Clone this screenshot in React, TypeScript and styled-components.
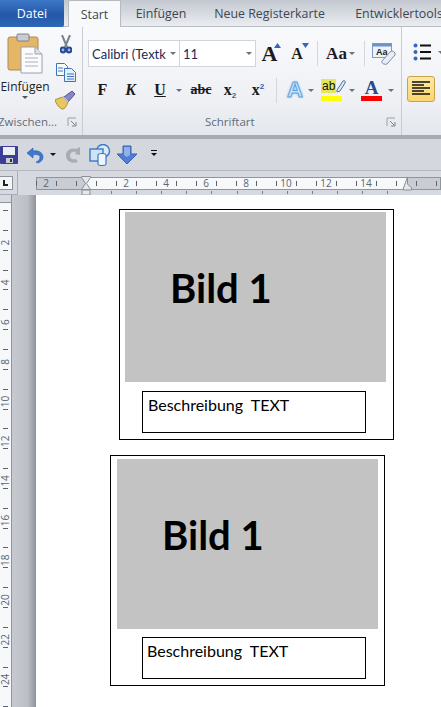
import styled, { createGlobalStyle } from 'styled-components'

const GlobalStyle = createGlobalStyle`
  html, body { margin: 0; padding: 0; background: #fff; overflow: hidden; }
  #root { width: 441px; height: 707px; overflow: hidden; }
`

const Window = styled.div`
  width: 441px;
  height: 707px;
  display: flex;
  flex-direction: column;
  font-family: "Open Sans", "Noto Sans", sans-serif;
  overflow: hidden;
`

const TabStrip = styled.div`
  height: 27px;
  flex-shrink: 0;
  display: flex;
  align-items: stretch;
  background: linear-gradient(#c3c8d0, #dfe2e7 70%, #eceef1);
  box-shadow: inset 0 -1px 0 #b9bdc4;
  white-space: nowrap;
`

const FileTab = styled.div`
  width: 64px;
  flex-shrink: 0;
  margin-right: 4px;
  display: flex;
  align-items: center;
  justify-content: center;
  color: #fff;
  font-size: 12.4px;
  background: linear-gradient(#3d77c7, #2458a8 55%, #2e68b8);
  border-radius: 0 0 2px 0;
`

const Tab = styled.div<{ $active?: boolean; $width: number }>`
  width: ${(p) => p.$width}px;
  flex-shrink: 0;
  box-sizing: border-box;
  display: flex;
  align-items: center;
  justify-content: center;
  font-size: 12.4px;
  color: #3f4650;
  background: ${(p) => (p.$active ? '#f8f9fb' : 'transparent')};
  border: ${(p) => (p.$active ? '1px solid #b6bac1' : 'none')};
  border-bottom: none;
  border-radius: 2px 2px 0 0;
`

const Ribbon = styled.div`
  height: 108px;
  flex-shrink: 0;
  display: flex;
  background: linear-gradient(#f9fafc, #eef0f4 70%, #e4e7ec);
  border-bottom: 4px solid #a6abb2;
  box-sizing: content-box;
`

const Group = styled.div<{ $width: number }>`
  width: ${(p) => p.$width}px;
  flex-shrink: 0;
  display: flex;
  flex-direction: column;
  border-right: 1px solid #c9cdd3;
  box-sizing: border-box;
`

const GroupBody = styled.div`
  flex: 1;
  min-height: 0;
  display: flex;
`

const GroupFooter = styled.div`
  height: 24px;
  flex-shrink: 0;
  display: flex;
  align-items: center;
  padding-bottom: 3px;
  box-sizing: border-box;
`

const GroupLabel = styled.div<{ $left: number }>`
  flex: 1;
  min-width: 0;
  margin-left: ${(p) => p.$left}px;
  font-size: 11.5px;
  color: #5f6b7d;
  white-space: nowrap;
`

const Launcher = styled.svg`
  width: 10px;
  height: 10px;
  flex-shrink: 0;
  margin-right: 5px;
`

const PasteColumn = styled.div`
  width: 50px;
  display: flex;
  flex-direction: column;
  align-items: center;
  padding-top: 6px;
`

const PasteLabel = styled.div`
  font-size: 12px;
  color: #222;
  margin: 5px 0 1px;
  line-height: 16px;
`

const SmallColumn = styled.div`
  margin-left: 5px;
  display: flex;
  flex-direction: column;
  align-items: center;
  gap: 9px;
  padding-top: 8px;
`

const FontBody = styled.div`
  flex: 1;
  display: flex;
  flex-direction: column;
  padding: 13px 0 0 5px;
`

const FontRow = styled.div`
  display: flex;
  align-items: center;
  height: 27px;
`

const Combo = styled.div<{ $width: number }>`
  width: ${(p) => p.$width}px;
  height: 27px;
  flex-shrink: 0;
  box-sizing: border-box;
  display: flex;
  align-items: center;
  padding: 0 3px;
  background: #fff;
  border: 1px solid #d2d6dc;
  font-family: "Lato", sans-serif;
  font-size: 13px;
  color: #1b2a55;
  overflow: hidden;
  white-space: nowrap;
  & + & { border-left: none; }
`

const ComboText = styled.span`
  flex: 1;
  min-width: 0;
  overflow: hidden;
`

const Caret = styled.span<{ $color?: string }>`
  display: inline-block;
  width: 0;
  height: 0;
  flex-shrink: 0;
  border-left: 3px solid transparent;
  border-right: 3px solid transparent;
  border-top: 3px solid ${(p) => p.$color ?? '#6d7178'};
`

const MoreCaret = styled(Caret)`
  position: relative;
  &::before {
    content: '';
    position: absolute;
    left: -3px;
    top: -6px;
    width: 6px;
    height: 1px;
    background: #111;
  }
`

const RowDivider = styled.div<{ $left?: number }>`
  width: 1px;
  height: 25px;
  flex-shrink: 0;
  margin-left: ${(p) => p.$left ?? 0}px;
  background: #d3d6db;
`

const GrowIcon = styled.div<{ $width: number; $size: number; $padLeft?: number }>`
  width: ${(p) => p.$width}px;
  flex-shrink: 0;
  box-sizing: border-box;
  padding-left: ${(p) => p.$padLeft ?? 0}px;
  position: relative;
  text-align: center;
  font-family: "Liberation Serif", serif;
  font-weight: 700;
  font-size: ${(p) => p.$size}px;
  line-height: 27px;
  color: #1c1c1c;
`

const ArrowMark = styled.svg`
  position: absolute;
  top: 3px;
  right: 2px;
  width: 7px;
  height: 5px;
`

const StyleRow = styled.div`
  display: flex;
  align-items: center;
  height: 26px;
  margin-top: 10px;
`

const FormatKey = styled.div<{ $width: number; $italic?: boolean; $underline?: boolean; $strike?: boolean }>`
  width: ${(p) => p.$width}px;
  flex-shrink: 0;
  text-align: center;
  font-family: "Liberation Serif", serif;
  font-weight: 900;
  font-size: ${(p) => (p.$strike ? 14 : 16)}px;
  color: #1a1a1a;
  font-style: ${(p) => (p.$italic ? 'italic' : 'normal')};
  text-decoration: ${(p) => (p.$underline ? 'underline' : p.$strike ? 'line-through' : 'none')};
  white-space: nowrap;
`

const Script = styled.sub<{ $up?: boolean }>`
  font-size: 8px;
  font-family: "Liberation Sans", sans-serif;
  color: #2d5fb0;
  vertical-align: ${(p) => (p.$up ? '6px' : '-3px')};
  line-height: 0;
`

const Slot = styled.div<{ $width: number }>`
  width: ${(p) => p.$width}px;
  flex-shrink: 0;
  display: flex;
  align-items: center;
  justify-content: center;
`

const ColorLetter = styled.div<{ $bar: string }>`
  width: 21px;
  display: flex;
  flex-direction: column;
  align-items: center;
  font-family: "Liberation Serif", serif;
  font-size: 19px;
  line-height: 17px;
  font-weight: 700;
  color: #2b4a8c;
  &::after {
    content: '';
    width: 21px;
    height: 5px;
    background: ${(p) => p.$bar};
  }
`

const HighlightRow = styled.div`
  align-self: flex-start;
  height: 17px;
  display: flex;
  align-items: flex-start;
`

const HighlightLetters = styled.span`
  height: 14px;
  padding: 0 1px;
  font-family: "Liberation Sans", sans-serif;
  font-size: 12px;
  line-height: 14px;
  font-weight: 400;
  color: #111;
  background: #e6e65c;
`

const GlowLetter = styled.div`
  width: 26px;
  margin-left: 5px;
  flex-shrink: 0;
  text-align: center;
  font-family: "Liberation Sans", sans-serif;
  font-size: 22px;
  line-height: 26px;
  font-weight: 700;
  color: #cfe4fa;
  -webkit-text-stroke: 1px #5ba0e0;
  text-shadow: 0 0 3px #7fbdf2;
`

const ParagraphBody = styled.div`
  flex: 1;
  display: flex;
  flex-direction: column;
  padding: 16px 0 0 5px;
`

const ListRow = styled.div`
  display: flex;
  align-items: center;
  gap: 7px;
  margin-left: 6px;
  height: 18px;
`

const AlignButton = styled.div`
  width: 28px;
  height: 26px;
  margin-top: 15px;
  box-sizing: border-box;
  display: flex;
  align-items: center;
  justify-content: center;
  background: linear-gradient(#fde9a4, #fbd56e);
  border: 1px solid #c9a24e;
  border-radius: 3px;
`

const QuickBar = styled.div`
  height: 32px;
  flex-shrink: 0;
  box-sizing: border-box;
  display: flex;
  align-items: center;
  background: #d4d8de;
  border-bottom: 1px solid #b4b8bf;
`

const QuickItem = styled.div<{ $width: number; $left?: number }>`
  width: ${(p) => p.$width}px;
  margin-left: ${(p) => p.$left ?? 0}px;
  height: 24px;
  flex-shrink: 0;
  display: flex;
  align-items: center;
  justify-content: center;
`

const RulerRow = styled.div`
  height: 24px;
  flex-shrink: 0;
  display: flex;
  background: #d6dae0;
`

const TabFrame = styled.div`
  width: 18px;
  height: 24px;
  flex-shrink: 0;
  box-sizing: border-box;
  padding-top: 5px;
  border-right: 1px solid #a9aeb6;
  border-bottom: 1px solid #a9aeb6;
`

const TabSelector = styled.div`
  width: 13px;
  height: 14px;
  box-sizing: border-box;
  background: #f4f5f7;
  border: 1px solid #8d939b;
  border-left: none;
  position: relative;
  &::after {
    content: '';
    position: absolute;
    left: 3px;
    top: 3px;
    width: 3px;
    height: 4px;
    border-left: 2px solid #222;
    border-bottom: 2px solid #222;
  }
`

const RulerSvg = styled.svg`
  display: block;
  flex-shrink: 0;
`

const Workspace = styled.div`
  flex: 1;
  min-height: 0;
  display: flex;
`

const SideRuler = styled.svg`
  width: 12px;
  height: 512px;
  flex-shrink: 0;
  display: block;
`

const PageGutter = styled.div`
  width: 24px;
  flex-shrink: 0;
  background: linear-gradient(90deg, #c6cad0, #bcc0c6 65%, #8f9399);
`

const Page = styled.div`
  flex: 1;
  min-width: 0;
  background: #fff;
  display: flex;
  flex-direction: column;
  padding-top: 14px;
  gap: 15px;
`

const Card = styled.div<{ $indent: number }>`
  width: 275px;
  height: 231px;
  margin-left: ${(p) => p.$indent}px;
  box-sizing: border-box;
  border: 1px solid #000;
  display: flex;
  flex-direction: column;
`

const PictureBox = styled.div<{ $left: number; $top: number }>`
  width: 261px;
  height: 170px;
  margin: ${(p) => p.$top}px 0 0 ${(p) => p.$left}px;
  background: #c3c3c3;
  padding: 53px 0 0 45px;
  box-sizing: border-box;
  font-family: "Lato", "Open Sans", sans-serif;
  font-size: 40px;
  font-weight: 700;
  line-height: 46px;
  color: #000;
`

const Caption = styled.div<{ $left: number; $top: number; $pad: number }>`
  width: 224px;
  height: 42px;
  margin: ${(p) => p.$top}px 0 0 ${(p) => p.$left}px;
  box-sizing: border-box;
  border: 1px solid #000;
  padding: 0 0 0 ${(p) => p.$pad}px;
  font-family: "Lato", "Open Sans", sans-serif;
  font-size: 16px;
  line-height: 26px;
  white-space: pre;
  color: #000;
`

const sideNumbers = [2, 4, 6, 8, 10, 12, 14, 16, 18, 20, 22, 24]
const oddTicks = Array.from({ length: 26 }, (_, i) => i)
const topNumbers = [2, 4, 6, 8, 10, 12, 14]
const tabStops = Array.from({ length: 12 }, (_, i) => 111 + i * 25.1 - 36)

function LauncherIcon() {
  return (
    <Launcher viewBox="0 0 10 10">
      <path d="M1 9V1h8" fill="none" stroke="#9aa0a8" />
      <path d="M4 4l4 4M9 5v4H5" fill="none" stroke="#7d838c" />
    </Launcher>
  )
}

function PasteIcon() {
  return (
    <svg width="36" height="41" viewBox="0 0 36 41">
      <rect x="1" y="4" width="30" height="33" rx="2" fill="#e6b667" stroke="#a98a5a" />
      <rect x="10" y="1" width="12" height="7" rx="1" fill="#c9ccd2" stroke="#7e8288" />
      <path d="M14 14h14l7 7v19H14z" fill="#fbfbfd" stroke="#9aa0a8" />
      <path d="M28 14v7h7" fill="#dde3ea" stroke="#9aa0a8" />
      <path d="M18 21h8M18 25h13M18 29h13M18 33h13" stroke="#a8b0bc" />
    </svg>
  )
}

function ScissorsIcon() {
  return (
    <svg width="12" height="19" viewBox="0 0 12 19">
      <path d="M2 0l5 12M10 0L5 12" stroke="#78838f" strokeWidth="2" />
      <circle cx="3" cy="15" r="2.4" fill="#9db7e0" stroke="#27479a" strokeWidth="2" />
      <circle cx="9" cy="15" r="2.4" fill="#9db7e0" stroke="#27479a" strokeWidth="2" />
    </svg>
  )
}

function CopyIcon() {
  return (
    <svg width="20" height="19" viewBox="0 0 20 19">
      <path d="M0.5 0.5h8l3 3v9h-11z" fill="#f7fafd" stroke="#3f74b8" />
      <path d="M8.5 5.5h7l4 4v9h-11z" fill="#e3eefa" stroke="#3f74b8" />
      <path d="M2 5h5M2 8h5M11 11h7M11 13.5h7M11 16h7" stroke="#3f74b8" />
    </svg>
  )
}

function BrushIcon() {
  return (
    <svg width="21" height="19" viewBox="0 0 21 19">
      <path d="M0 9c4-2 7-3 9-3l4 5c-1 3-3 7-5 7-3 0-7-5-8-9z" fill="#e8c75b" stroke="#a68a3a" />
      <path d="M9 6l4 5 7-8-3-3z" fill="#8b84c9" stroke="#56508f" />
      <path d="M8 6l5 5" stroke="#b8bcc4" strokeWidth="2" />
    </svg>
  )
}

function ClearIcon() {
  return (
    <svg width="24" height="22" viewBox="0 0 24 22">
      <rect x="0.5" y="0.5" width="19" height="14" fill="#eef3fa" stroke="#7d9cc4" />
      <rect x="0.5" y="0.5" width="19" height="3" fill="#6f93c6" />
      <text x="4" y="12" fontSize="9" fontWeight="700" fontFamily="Liberation Sans" fill="#222">Aa</text>
      <path d="M10 18l8-9a3 3 0 0 1 5 3l-8 9c-3 1-6-1-5-3z" fill="#e9edf3" stroke="#7e8ea6" />
    </svg>
  )
}

function PenIcon() {
  return (
    <svg width="10" height="14" viewBox="0 0 10 14">
      <path d="M1 11l6-9c1-1 3 0 2 2L4 12l-3 1z" fill="#dfe8f4" stroke="#4f6fa5" />
    </svg>
  )
}

function BulletsIcon() {
  return (
    <svg width="18" height="18" viewBox="0 0 18 18">
      <circle cx="2.5" cy="2.5" r="2" fill="#3a66b8" />
      <circle cx="2.5" cy="9" r="2" fill="#3a66b8" />
      <circle cx="2.5" cy="15.5" r="2" fill="#3a66b8" />
      <path d="M7 2.5h11M7 9h11M7 15.5h11" stroke="#111" strokeWidth="2" />
    </svg>
  )
}

function AlignLeftIcon() {
  return (
    <svg width="18" height="16" viewBox="0 0 18 16">
      <path d="M0 1h18M0 4h12M0 7h18M0 10h12M0 13h18" stroke="#111" strokeWidth="1.4" />
    </svg>
  )
}

function SaveIcon() {
  return (
    <svg width="18" height="18" viewBox="0 0 18 18">
      <rect x="0" y="0" width="18" height="18" rx="1" fill="#3b3e96" />
      <rect x="3" y="1" width="12" height="8" fill="#e8edf6" />
      <rect x="6" y="12" width="7" height="5" fill="#c9ccd6" />
      <rect x="10" y="13" width="2" height="3" fill="#333" />
    </svg>
  )
}

function UndoIcon() {
  return (
    <svg width="18" height="18" viewBox="0 0 18 18">
      <path d="M1 7l6-5v3c6-1 10 2 10 6 0 3-2 5-5 6l-2-1c3-1 4-3 4-5 0-2-3-3-7-2v3z" fill="#3e78cf" stroke="#2a5aa8" strokeWidth="0.6" />
    </svg>
  )
}

function RedoIcon() {
  return (
    <svg width="18" height="18" viewBox="0 0 18 18">
      <path d="M16 1v8l-5-1 1-2c-3-1-6 0-6 3.500s3 4.500 6 3.500l2 3c-5 2-12 0-12-6.500 0-5 5-8 10-6.500z" fill="#a9adb3" />
    </svg>
  )
}

function ShapesIcon() {
  return (
    <svg width="22" height="22" viewBox="0 0 22 22">
      <circle cx="14" cy="7" r="6.500" fill="#dbe9f8" stroke="#3d78c4" strokeWidth="1.400" />
      <rect x="1" y="5" width="13" height="12" fill="#cfe2f6" stroke="#3d78c4" strokeWidth="1.400" />
      <path d="M9 11c0-2 8-2 8 0v9c0 2-8 2-8 0z" fill="#eef5fc" stroke="#3d78c4" strokeWidth="1.200" />
    </svg>
  )
}

function DownIcon() {
  return (
    <svg width="22" height="20" viewBox="0 0 22 20">
      <path d="M7 1h8v8h6l-10 10L1 9h6z" fill="#4f7fd4" stroke="#3a62ad" />
      <path d="M8 2h6v8l-3 2-3-2z" fill="#8fb0e8" />
    </svg>
  )
}

function TopRuler() {
  return (
    <RulerSvg width="405" height="24" viewBox="0 0 405 24">
      <rect x="0.5" y="6.5" width="404" height="12" fill="#c9cdd3" stroke="#8f959d" />
      <rect x="50" y="7" width="321" height="11" fill="#f7f8f9" />
      <text x="10" y="16" fontSize="10" textAnchor="middle" fontFamily="Open Sans" fill="#5a6473">2</text>
      {oddTicks.map((i) => (
        <path key={i} d={`M${i * 20 + 0.5} 10v5`} stroke="#5d636c" />
      ))}
      {topNumbers.map((n) => (
        <text key={n} x={50 + n * 20} y="16" fontSize="10" textAnchor="middle" fontFamily="Open Sans" fill="#5a6473">
          {n}
        </text>
      ))}
      {tabStops.map((x) => (
        <path key={x} d={`M${Math.round(x) + 0.5} 20v3`} stroke="#7b8088" />
      ))}
      <path d="M45.5 5.5h9v1l-4 6 4 6v0h-9l4-6-4-6z" fill="#e6e7e9" stroke="#8a8f96" />
      <rect x="46" y="19" width="8" height="5" fill="#e6e7e9" stroke="#8a8f96" />
      <path d="M371.5 6v7l4 4v2h-8v-2z" fill="#e6e7e9" stroke="#8a8f96" />
    </RulerSvg>
  )
}

function LeftRuler() {
  return (
    <SideRuler viewBox="0 0 12 512">
      <rect width="12" height="512" fill="#f7f8f9" />
      <rect width="12" height="8" fill="#d6dae0" />
      <path d="M0 7.500h12M11.500 0v512" stroke="#8f959d" />
      {oddTicks.map((i) => (
        <path key={i} d={`M3 ${Math.round(i * 19.85 + 15) + 0.5}h5`} stroke="#5d636c" />
      ))}
      {sideNumbers.map((n) => (
        <text
          key={n}
          x="0"
          y="0"
          fontSize="10"
          textAnchor="middle"
          fontFamily="Open Sans"
          fill="#5a6473"
          transform={`translate(9 ${8 + n * 19.85}) rotate(-90)`}
        >
          {n}
        </text>
      ))}
    </SideRuler>
  )
}

export default function App() {
  return (
    <Window>
      <GlobalStyle />
      <TabStrip>
        <FileTab>Datei</FileTab>
        <Tab $active $width={53}>Start</Tab>
        <Tab $width={80}>Einfügen</Tab>
        <Tab $width={137}>Neue Registerkarte</Tab>
        <Tab $width={122}>Entwicklertools</Tab>
      </TabStrip>

      <Ribbon>
        <Group $width={83}>
          <GroupBody>
            <PasteColumn>
              <PasteIcon />
              <PasteLabel>Einfügen</PasteLabel>
              <Caret $color="#555" />
            </PasteColumn>
            <SmallColumn>
              <ScissorsIcon />
              <CopyIcon />
              <BrushIcon />
            </SmallColumn>
          </GroupBody>
          <GroupFooter>
            <GroupLabel $left={-2}>Zwischen...</GroupLabel>
            <LauncherIcon />
          </GroupFooter>
        </Group>

        <Group $width={319}>
          <GroupBody>
            <FontBody>
              <FontRow>
                <Combo $width={92}>
                  <ComboText>Calibri (Textk</ComboText>
                  <Caret />
                </Combo>
                <Combo $width={76}>
                  <ComboText>11</ComboText>
                  <Caret />
                </Combo>
                <GrowIcon $width={27} $size={22}>
                  A
                  <ArrowMark viewBox="0 0 7 5"><path d="M3.5 0L7 5H0z" fill="#3a66b8" /></ArrowMark>
                </GrowIcon>
                <GrowIcon $width={28} $size={16}>
                  A
                  <ArrowMark viewBox="0 0 7 5"><path d="M3.5 5L7 0H0z" fill="#3a66b8" /></ArrowMark>
                </GrowIcon>
                <RowDivider $left={6} />
                <GrowIcon $width={31} $size={17} $padLeft={6}>Aa</GrowIcon>
                <Caret />
                <RowDivider $left={9} />
                <Slot $width={38}><ClearIcon /></Slot>
              </FontRow>
              <StyleRow>
                <FormatKey $width={29}>F</FormatKey>
                <FormatKey $width={27} $italic>K</FormatKey>
                <FormatKey $width={32} $underline>U</FormatKey>
                <Caret />
                <FormatKey $width={38} $strike>abc</FormatKey>
                <FormatKey $width={20}>x<Script>2</Script></FormatKey>
                <FormatKey $width={36}>x<Script $up>2</Script></FormatKey>
                <RowDivider />
                <GlowLetter>A</GlowLetter>
                <Caret />
                <Slot $width={35}>
                  <ColorLetter $bar="#ffff00">
                    <HighlightRow>
                      <HighlightLetters>ab</HighlightLetters>
                      <PenIcon />
                    </HighlightRow>
                  </ColorLetter>
                </Slot>
                <Caret />
                <Slot $width={33}>
                  <ColorLetter $bar="#ff0000">A</ColorLetter>
                </Slot>
                <Caret />
              </StyleRow>
            </FontBody>
          </GroupBody>
          <GroupFooter>
            <GroupLabel $left={122}>Schriftart</GroupLabel>
            <LauncherIcon />
          </GroupFooter>
        </Group>

        <ParagraphBody>
          <ListRow>
            <BulletsIcon />
            <Caret />
          </ListRow>
          <AlignButton>
            <AlignLeftIcon />
          </AlignButton>
        </ParagraphBody>
      </Ribbon>

      <QuickBar>
        <QuickItem $width={18}><SaveIcon /></QuickItem>
        <QuickItem $width={18} $left={8}><UndoIcon /></QuickItem>
        <QuickItem $width={10} $left={4}><Caret $color="#111" /></QuickItem>
        <QuickItem $width={18} $left={6}><RedoIcon /></QuickItem>
        <QuickItem $width={22} $left={7}><ShapesIcon /></QuickItem>
        <QuickItem $width={22} $left={5}><DownIcon /></QuickItem>
        <QuickItem $width={10} $left={11}><MoreCaret $color="#111" /></QuickItem>
      </QuickBar>

      <RulerRow>
        <TabFrame>
          <TabSelector />
        </TabFrame>
        <Slot $width={18} />
        <TopRuler />
      </RulerRow>

      <Workspace>
        <LeftRuler />
        <PageGutter />
        <Page>
          <Card $indent={83}>
            <PictureBox $left={5} $top={2}>Bild 1</PictureBox>
            <Caption $left={22} $top={9} $pad={5}>Beschreibung  TEXT</Caption>
          </Card>
          <Card $indent={74}>
            <PictureBox $left={6} $top={3}>Bild 1</PictureBox>
            <Caption $left={31} $top={8} $pad={4}>Beschreibung  TEXT</Caption>
          </Card>
        </Page>
      </Workspace>
    </Window>
  )
}
